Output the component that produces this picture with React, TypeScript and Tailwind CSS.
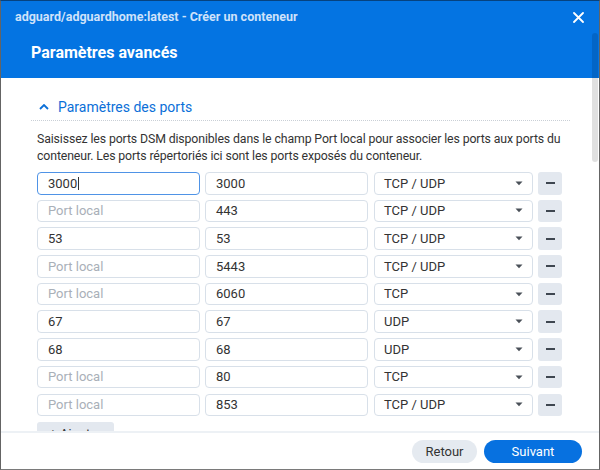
import React from "react";

const rows: { local: string; container: string; proto: string; focus?: boolean }[] = [
  { local: "3000", container: "3000", proto: "TCP / UDP", focus: true },
  { local: "", container: "443", proto: "TCP / UDP" },
  { local: "53", container: "53", proto: "TCP / UDP" },
  { local: "", container: "5443", proto: "TCP / UDP" },
  { local: "", container: "6060", proto: "TCP" },
  { local: "67", container: "67", proto: "UDP" },
  { local: "68", container: "68", proto: "UDP" },
  { local: "", container: "80", proto: "TCP" },
  { local: "", container: "853", proto: "TCP / UDP" },
];

function Row({ r }: { r: (typeof rows)[number] }) {
  return (
    <div className="flex h-[22.6px] items-stretch">
      <div
        className={
          r.focus
            ? "flex w-[163px] items-center rounded-[4px] border border-[#4f93e6] bg-white pl-[10px] text-[13px] text-[#333]"
            : "flex w-[163px] items-center rounded-[4px] border border-[#d8e0e9] bg-white pl-[10px] text-[13px] text-[#333]"
        }
      >
        {r.local ? (
          <span>
            {r.local}
            {r.focus ? <span className="ml-[1px] inline-block h-[13px] w-[1px] translate-y-[2px] bg-[#333]" /> : null}
          </span>
        ) : (
          <span className="text-[#a9b0b8]">Port local</span>
        )}
      </div>
      <div className="ml-[5px] flex w-[163px] items-center rounded-[4px] border border-[#d8e0e9] bg-white pl-[10px] text-[13px] text-[#333]">
        {r.container}
      </div>
      <div className="ml-[6px] flex w-[159px] items-center justify-between rounded-[4px] border border-[#d8e0e9] bg-white pl-[9px] pr-[9px] text-[13px] text-[#333]">
        <span>{r.proto}</span>
        <svg width="8" height="5" viewBox="0 0 8 5">
          <path d="M0.5 0.5 L7.5 0.5 L4 4.2 Z" fill="#4a5058" />
        </svg>
      </div>
      <div className="ml-[5px] flex w-[24px] items-center justify-center rounded-[3px] bg-[#e3e8ef]">
        <div className="h-[2px] w-[9px] bg-[#3e4650]" />
      </div>
    </div>
  );
}

export default function App() {
  return (
    <div
      className="flex h-[470px] w-[600px] flex-col overflow-hidden border border-t-[#06427f] border-x-[#646464] border-b-[#7a7a7a] bg-white"
      style={{ fontFamily: 'Roboto, "Noto Sans", sans-serif' }}
    >
      {/* title bar */}
      <div className="flex h-[32px] shrink-0 items-center justify-between bg-[#0474e2] pl-[14px] pr-[15px]">
        <span className="text-[12.5px] font-bold text-[#cfe2fa]">adguard/adguardhome:latest - Créer un conteneur</span>
        <svg width="11" height="11" viewBox="0 0 11 11">
          <path d="M1 1 L10 10 M10 1 L1 10" stroke="#ffffff" strokeWidth="1.8" strokeLinecap="round" />
        </svg>
      </div>

      {/* scroll area */}
      <div className="relative flex-1 overflow-hidden">
        <div className="h-[45px] bg-[#0474e2] pl-[30px] pt-[8px]">
          <span className="text-[16px] font-bold leading-[20px] text-white">Paramètres avancés</span>
        </div>

        <div className="ml-[30px] mr-[29px] pt-[19px]">
          <div className="flex h-[20px] items-center pl-[8px] text-[14px] text-[#0b6fd8]">
            <svg width="10" height="6" viewBox="0 0 10 6" className="mr-[9px]">
              <path d="M1 5 L5 1 L9 5" fill="none" stroke="#0b6fd8" strokeWidth="1.8" />
            </svg>
            <span>Paramètres des ports</span>
          </div>
          <div className="mt-[3px] border-t border-dotted border-[#c9cfd6]" />
          <div className="pl-[6px]">
            <p className="mt-[10px] text-[12.3px] leading-[17px] tracking-[-0.12px] text-[#333]">
              Saisissez les ports DSM disponibles dans le champ Port local pour associer les ports aux ports du conteneur. Les ports répertoriés ici sont les ports exposés du conteneur.
            </p>
            <div className="mt-[7px] flex flex-col gap-[5.1px]">
              {rows.map((r, i) => (
                <Row key={i} r={r} />
              ))}
            </div>
            <div className="mt-[5.7px] flex h-[23px] w-[77px] items-center justify-center rounded-[3px] bg-[#e3e8ef] text-[13px] text-[#333]">
              + Ajouter
            </div>
          </div>
        </div>

        {/* scrollbar thumb */}
        <div className="absolute right-[1px] top-0 h-[129px] w-[6px] rounded-[3px] bg-[rgba(0,0,0,0.12)]" />
      </div>

      {/* footer */}
      <div className="flex h-[38px] shrink-0 justify-end gap-[7px] border-t-2 border-[#edf1f5] pr-[17px] pt-[7px]">
        <div className="flex h-[23px] w-[65px] items-center justify-center rounded-full bg-[#e5eaf0] text-[13px] text-[#333]">
          Retour
        </div>
        <div className="flex h-[23px] w-[98px] items-center justify-center rounded-full bg-[#0771e0] text-[13px] text-white">
          Suivant
        </div>
      </div>
    </div>
  );
}
